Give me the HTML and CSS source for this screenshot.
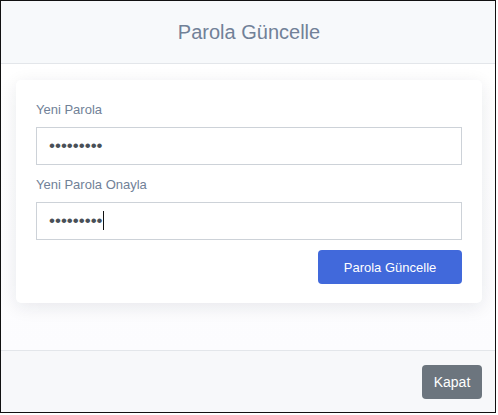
FILE: index.html
```html
<!DOCTYPE html>
<html lang="tr">
<head>
<meta charset="utf-8">
<title>Parola Güncelle</title>
<link rel="stylesheet" href="styles.css">
</head>
<body>
<div class="modal">
  <div class="modal-header">
    <h1 class="modal-title">Parola Güncelle</h1>
  </div>
  <div class="modal-body">
    <div class="card">
      <label class="label" for="p1">Yeni Parola</label>
      <input class="input" id="p1" type="password" value="123456789">
      <label class="label label-2" for="p2">Yeni Parola Onayla</label>
      <div class="field">
        <input class="input" id="p2" type="password" value="123456789">
        <span class="caret"></span>
      </div>
      <div class="actions">
        <button class="btn btn-primary" type="button">Parola Güncelle</button>
      </div>
    </div>
  </div>
  <div class="modal-footer">
    <button class="btn btn-secondary" type="button">Kapat</button>
  </div>
</div>
</body>
</html>
```

FILE: styles.css
```css
html, body {
  margin: 0;
  padding: 0;
  background: #ffffff;
}
body {
  font-family: "Liberation Sans", Arial, sans-serif;
}
.modal {
  width: 496px;
  height: 413px;
  box-sizing: border-box;
  border: 1px solid #111;
  display: flex;
  flex-direction: column;
  background: #fff;
}
.modal-header {
  height: 62px;
  background: #f7f9fb;
  border-bottom: 1px solid #e3e6ea;
  display: flex;
  align-items: center;
  justify-content: center;
  padding-left: 2px;
}
.modal-title {
  margin: 0;
  font-weight: normal;
  font-size: 20px;
  color: #718198;
}
.modal-body {
  flex: 1;
  padding: 16px 13px 0 15px;
  background: linear-gradient(#ffffff, #fcfcfe);
}
.card {
  background: #fff;
  border-radius: 5px;
  box-shadow: 0 4px 18px rgba(20, 30, 60, 0.09);
  padding: 20px 20px 19px 20px;
  display: flex;
  flex-direction: column;
}
.label {
  font-size: 13px;
  line-height: 19px;
  color: #718198;
  margin-bottom: 8px;
}
.label-2 {
  margin-top: 10px;
}
.field {
  position: relative;
  display: flex;
  flex-direction: column;
}
.input {
  height: 38px;
  box-sizing: border-box;
  border: 1px solid #cdd2d8;
  border-radius: 0;
  padding: 0 12px;
  font-family: "Liberation Sans", Arial, sans-serif;
  font-size: 17px;
  color: #495057;
  background: #fff;
  outline: none;
  margin: 0;
}
.caret {
  position: absolute;
  left: 67px;
  top: 9px;
  width: 1px;
  height: 19px;
  background: #111;
}
.actions {
  display: flex;
  justify-content: flex-end;
  margin-top: 10px;
}
.btn {
  font-family: "Liberation Sans", Arial, sans-serif;
  border: none;
  border-radius: 4px;
  color: #fff;
  cursor: pointer;
  padding: 0;
}
.btn-primary {
  width: 144px;
  height: 34px;
  background: #4169db;
  font-size: 13px;
}
.modal-footer {
  height: 61px;
  border-top: 1px solid #e3e6ea;
  background: #f7f8fa;
  display: flex;
  align-items: center;
  justify-content: flex-end;
  padding-right: 13px;
}
.btn-secondary {
  width: 60px;
  height: 34px;
  background: #6c757e;
  font-size: 14px;
}
```
